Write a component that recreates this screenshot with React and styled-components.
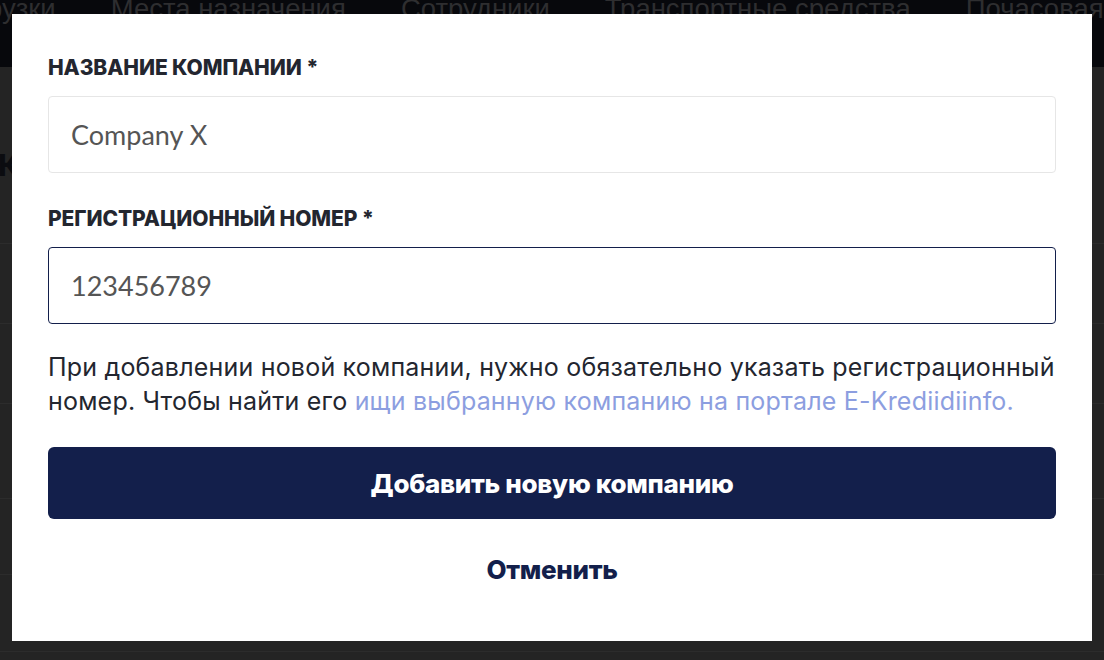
import React from 'react';
import styled, { createGlobalStyle } from 'styled-components';

const GlobalStyle = createGlobalStyle`
  html, body {
    margin: 0;
    padding: 0;
    background: #242424;
    overflow: hidden;
  }
  * { box-sizing: border-box; }
`;

const Page = styled.div`
  width: 1104px;
  height: 660px;
  overflow: hidden;
  background: #242424;
  font-family: Inter, "Noto Sans", sans-serif;
`;

const NavBar = styled.div`
  height: 67px;
  background: #07080c;
  display: flex;
  align-items: flex-start;
  gap: 55px;
  overflow: hidden;
  white-space: nowrap;
`;

const NavItem = styled.span`
  font-family: "Liberation Sans", Arial, sans-serif;
  font-size: 27.5px;
  line-height: 1;
  margin-top: -5px;
  color: #2e2e30;
  margin-left: ${(p) => (p.$first ? '-55px' : '0')};
`;

const Content = styled.div`
  padding-top: 80px;
`;

const Heading = styled.div`
  font-size: 30px;
  font-weight: 800;
  color: #0b0c10;
  margin-left: -2px;
  height: 96px;
`;

const Row = styled.div`
  height: ${(p) => p.$h}px;
  border-top: 1px solid #2c2c2c;
`;

const Overlay = styled.div`
  position: fixed;
  inset: 0;
  padding: 14px 12px;
`;

const Modal = styled.div`
  width: 1080px;
  height: 627px;
  background: #ffffff;
  padding: 41px 36px 0;
  display: flex;
  flex-direction: column;
`;

const Label = styled.label`
  font-size: 21px;
  line-height: 26px;
  font-weight: 800;
  letter-spacing: -0.1px;
  text-transform: uppercase;
  color: #23262f;
  margin-bottom: 15px;
`;

const Input = styled.input`
  width: 100%;
  height: ${(p) => p.$h}px;
  flex: none;
  padding: 0 22px;
  border: 1px solid ${(p) => (p.$focused ? '#131f4b' : '#e6e6e6')};
  border-radius: 4px;
  font-family: Lato, "Open Sans", sans-serif;
  font-size: 27px;
  color: #555555;
  background: #fff;
  outline: none;
  margin-bottom: ${(p) => p.$mb}px;
`;

const Hint = styled.p`
  margin: 0 0 29px;
  font-size: 25px;
  line-height: 34px;
  letter-spacing: 0.2px;
  color: #23262f;
`;

const Link = styled.a`
  color: #8c9ee0;
  text-decoration: none;
`;

const PrimaryButton = styled.button`
  width: 100%;
  height: 72px;
  flex: none;
  border: none;
  border-radius: 6px;
  background: #131f4b;
  color: #ffffff;
  font-family: Inter, "Noto Sans", sans-serif;
  font-size: 26px;
  font-weight: 800;
  letter-spacing: -0.3px;
  cursor: pointer;
`;

const CancelButton = styled.button`
  align-self: center;
  margin-top: 36px;
  padding: 0;
  border: none;
  background: none;
  color: #131f4b;
  font-family: Inter, "Noto Sans", sans-serif;
  font-size: 26px;
  line-height: 30px;
  font-weight: 800;
  letter-spacing: -0.3px;
  cursor: pointer;
`;

const navItems = ['Загрузки', 'Места назначения', 'Сотрудники', 'Транспортные средства', 'Почасовая оплата'];
const rows = [80, 80, 95, 76, 77, 80];

export default function App() {
  return (
    <Page>
      <GlobalStyle />
      <NavBar>
        {navItems.map((item, i) => (
          <NavItem key={item} $first={i === 0}>{item}</NavItem>
        ))}
      </NavBar>
      <Content>
        <Heading>Компании</Heading>
        {rows.map((h, i) => (
          <Row key={i} $h={h} />
        ))}
      </Content>
      <Overlay>
        <Modal>
          <Label>Название компании *</Label>
          <Input defaultValue="Company X" $h={77} $mb={33} />
          <Label>Регистрационный номер *</Label>
          <Input defaultValue="123456789" $h={77} $focused $mb={26} />
          <Hint>
            При добавлении новой компании, нужно обязательно указать регистрационный номер. Чтобы найти его{' '}
            <Link href="#">ищи выбранную компанию на портале E-Krediidiinfo.</Link>
          </Hint>
          <PrimaryButton>Добавить новую компанию</PrimaryButton>
          <CancelButton>Отменить</CancelButton>
        </Modal>
      </Overlay>
    </Page>
  );
}
